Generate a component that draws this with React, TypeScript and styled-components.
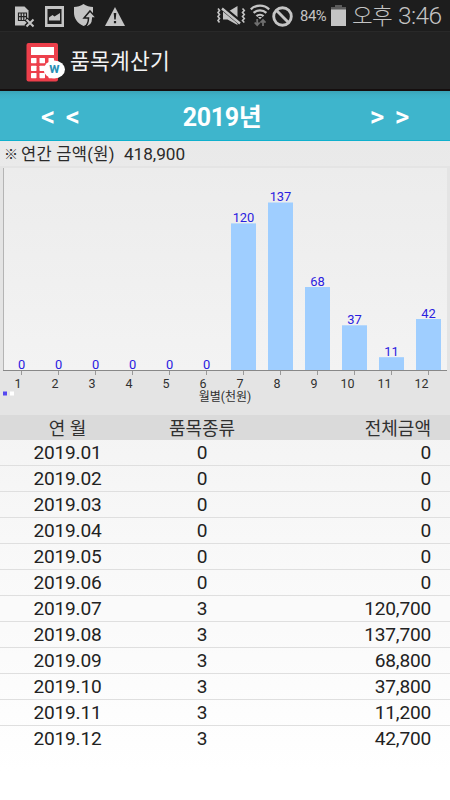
import React from "react";
import styled, { createGlobalStyle } from "styled-components";

const GlobalStyle = createGlobalStyle`
  body {
    margin: 0;
    background: #fff;
    font-family: Roboto, "Noto Sans CJK KR", sans-serif;
  }
`;

const Screen = styled.div`
  width: 450px;
  height: 800px;
  display: flex;
  flex-direction: column;
  overflow: hidden;
`;

const StatusBar = styled.header`
  height: 31px;
  flex: none;
  background: #1d1d1d;
  color: #c4c4c4;
  display: flex;
  align-items: center;
  justify-content: space-between;
  padding: 0 9px 0 14px;
  box-sizing: border-box;
`;

const StatusGroup = styled.div`
  display: flex;
  align-items: center;
  height: 31px;
`;

const StatusIcon = styled.svg<{ $gap?: number; $drop?: number }>`
  display: block;
  flex: none;
  margin-right: ${(p) => p.$gap ?? 0}px;
  margin-top: ${(p) => p.$drop ?? 0}px;
`;

const Battery = styled.span`
  font-size: 14.8px;
  line-height: 31px;
  letter-spacing: -0.4px;
  width: 28px;
  margin-right: 3px;
  padding-top: 2px;
  white-space: nowrap;
`;

const Clock = styled.span`
  display: flex;
  align-items: center;
  width: 89px;
  font-weight: 300;
  font-size: 24.5px;
  line-height: 31px;
  letter-spacing: -0.6px;
  white-space: nowrap;
`;

const ClockPeriod = styled.span`
  width: 46px;
  flex: none;
  font-size: 22.5px;
  line-height: 28px;
  letter-spacing: -0.8px;
`;

const TitleBar = styled.div`
  height: 60px;
  flex: none;
  box-sizing: border-box;
  background: #222;
  border-top: 1px solid #292929;
  border-bottom: 2px solid #150e0e;
  display: flex;
  align-items: center;
  padding: 3px 0 0 26px;
`;

const Title = styled.h1`
  margin: 0 0 0 5px;
  color: #f3f3f3;
  font-size: 21.5px;
  line-height: 30px;
  font-weight: 400;
  letter-spacing: 0.25px;
`;

const YearBar = styled.nav`
  height: 50px;
  flex: none;
  box-sizing: border-box;
  display: grid;
  grid-template-columns: 121px 1fr 121px;
  align-items: center;
  background: linear-gradient(#3aa4b7 0, #3db0c6 4px, #3eb5cc 9px);
  border-bottom: 1px solid #0fb0cd;
  color: #fff;
`;

const Arrow = styled.button`
  border: 0;
  background: none;
  padding: 0;
  color: #fff;
  font: 500 28px/48px Roboto, sans-serif;
  word-spacing: 3.6px;
  text-align: center;
  white-space: nowrap;
`;

const Year = styled.div`
  text-align: center;
  font-size: 25px;
  line-height: 49px;
  font-weight: 700;
  padding: 2px 6px 0 0;
  letter-spacing: -0.35px;
`;

const Content = styled.main`
  flex: 1;
  display: flex;
  flex-direction: column;
  background: linear-gradient(#e9e9e9, #fff 630px);
`;

const Summary = styled.div`
  height: 25px;
  flex: none;
  display: flex;
  padding-left: 4px;
  font-size: 16.5px;
  line-height: 27px;
  color: #2a2a2a;
  white-space: pre;
`;

const Mark = styled.span`
  width: 17px;
  font-size: 14px;
  font-weight: 300;
`;

const SummaryLabel = styled.span`
  width: 103px;
  letter-spacing: 0.3px;
`;

const SummaryAmount = styled.span`
  font-size: 17.2px;
  letter-spacing: -0.05px;
  line-height: 26px;
`;

const ChartArea = styled.section`
  height: 249px;
  flex: none;
  background: #e4e4e4;
`;

const ChartSvg = styled.svg`
  display: block;
`;

const ChartLabel = styled.text<{ $tone: "value" | "month" | "caption" }>`
  font-size: ${(p) => ({ value: 12.9, month: 12.5, caption: 12 })[p.$tone]}px;
  fill: ${(p) => (p.$tone === "value" ? "#2a20e0" : "#303030")};
  text-anchor: ${(p) => (p.$tone === "month" ? "end" : "middle")};
`;

const Table = styled.section`
  display: flex;
  flex-direction: column;
`;

const Row = styled.div<{ $head?: boolean; $last?: boolean }>`
  height: ${(p) => (p.$head ? 25 : 26)}px;
  box-sizing: border-box;
  display: grid;
  grid-template-columns: 135px 134px 1fr;
  padding-right: 19px;
  text-align: center;
  font-size: ${(p) => (p.$head ? 18 : 19.1)}px;
  letter-spacing: ${(p) => (p.$head ? 0 : -0.2)}px;
  line-height: ${(p) => (p.$head ? 27 : 26)}px;
  color: ${(p) => (p.$head ? "#303030" : "#222")};
  background: ${(p) => (p.$head ? "#dadada" : "rgba(255,255,255,.15)")};
  border-bottom: ${(p) => (p.$head || p.$last ? 0 : 1)}px solid #dfdfdf;
`;

const Amount = styled.span`
  text-align: right;
`;

const months = [
  { value: 0, top: 370, kinds: 0, total: "0" },
  { value: 0, top: 370, kinds: 0, total: "0" },
  { value: 0, top: 370, kinds: 0, total: "0" },
  { value: 0, top: 370, kinds: 0, total: "0" },
  { value: 0, top: 370, kinds: 0, total: "0" },
  { value: 0, top: 370, kinds: 0, total: "0" },
  { value: 120, top: 223.4, kinds: 3, total: "120,700" },
  { value: 137, top: 202.5, kinds: 3, total: "137,700" },
  { value: 68, top: 287, kinds: 3, total: "68,800" },
  { value: 37, top: 325.3, kinds: 3, total: "37,800" },
  { value: 11, top: 357.2, kinds: 3, total: "11,200" },
  { value: 42, top: 319, kinds: 3, total: "42,700" },
];

function SimIcon() {
  return (
    <StatusIcon width="21" height="23" viewBox="0 0 21 23" $gap={10} $drop={1}>
      <path d="M1 1.500h9.500l4 4V20.500H1z" fill="#c4c4c4" />
      <path d="M4.500 8h8v7.500h-8zM4.500 11.700h8M7.200 8v7.500M9.800 8v7.500" fill="none" stroke="#222" strokeWidth="1.200" />
      <path d="M12 14l7.500 7.500m0-7.500L12 21.500" stroke="#1d1d1d" strokeWidth="4.500" />
      <path d="M12.500 14.500l7 7m0-7l-7 7" stroke="#c4c4c4" strokeWidth="2" />
    </StatusIcon>
  );
}

function PictureIcon() {
  return (
    <StatusIcon width="19" height="21" viewBox="0 0 19 21" $gap={9} $drop={1}>
      <path d="M0 0h19v21H0z" fill="#c4c4c4" />
      <path d="M2.500 3h14v15h-14z" fill="#1f1f1f" />
      <path d="M4 14.500v-3l3.500-2.500 2 1.500L15 7v7.500z" fill="#c4c4c4" />
    </StatusIcon>
  );
}

function ShieldIcon() {
  return (
    <StatusIcon width="24" height="25" viewBox="0 0 24 25" $gap={8}>
      <path d="M10.500 1C8 3 4 4 1 4v6c0 5 3 10 9.500 13C16 21 20 17 20 11V4c-3 0-7-1-9.500-3z" fill="#c4c4c4" />
      <path
        d="M17 8l6.500 7h-3.700c0 6-3.500 9-8.300 9 3-2 4-4.500 4-9H11z"
        fill="#c4c4c4"
        stroke="#1d1d1d"
        strokeWidth="1.500"
      />
    </StatusIcon>
  );
}

function WarningIcon() {
  return (
    <StatusIcon width="20" height="19" viewBox="0 0 20 19" $drop={1}>
      <path d="M10 0l10 19H0z" fill="#c4c4c4" />
      <path d="M8.700 6h2.600l-.6 6.500H9.300zM8.900 14h2.200v2.200H8.900z" fill="#1d1d1d" />
    </StatusIcon>
  );
}

function MuteIcon() {
  return (
    <StatusIcon width="30" height="20" viewBox="0 0 30 20" $gap={4} $drop={1}>
      <path d="M7 6h4.500L21.500 0v19l-10-5.500H7z" fill="#c4c4c4" />
      <path d="M6 1.500l20 16.500" stroke="#1d1d1d" strokeWidth="5" />
      <path d="M6 2.500l18 15" stroke="#c4c4c4" strokeWidth="2.400" />
      <path
        d="M2 2.500l1.500 2L2 6.500l1.500 2-1.500 2 1.500 2-1.500 2 1.500 2M26.500 2.500l1.800 2-1.800 2 1.800 2-1.800 2 1.800 2-1.800 2 1.800 2"
        fill="none"
        stroke="#c4c4c4"
        strokeWidth="1.600"
      />
    </StatusIcon>
  );
}

function WifiIcon() {
  return (
    <StatusIcon width="20" height="23" viewBox="0 0 20 23" $gap={2}>
      <path
        d="M.8 5.300c5.200-5 13.200-5 18.400 0M3.600 8.900c3.600-3.400 9.200-3.400 12.800 0M6.500 12.200c2-1.900 5-1.900 7 0"
        fill="none"
        stroke="#c4c4c4"
        strokeWidth="2.300"
      />
      <path d="M8 13h4l-2 2.300z" fill="#c4c4c4" />
      <path d="M7.200 15v6M4.700 18.500l2.500 2.700 2.500-2.700M13 22v-6M10.500 18.700l2.500-2.700 2.500 2.700" fill="none" stroke="#707070" strokeWidth="1.800" />
    </StatusIcon>
  );
}

function BlockedIcon() {
  return (
    <StatusIcon width="21" height="21" viewBox="0 0 21 21" $gap={7} $drop={1}>
      <circle cx="10.500" cy="10.500" r="8.800" fill="none" stroke="#c4c4c4" strokeWidth="2.900" />
      <path d="M4.300 4.300l12.400 12.400" stroke="#c4c4c4" strokeWidth="2.900" />
    </StatusIcon>
  );
}

function BatteryIcon() {
  return (
    <StatusIcon width="15" height="21" viewBox="0 0 15 21" $gap={6}>
      <path d="M4 0h7v2h4v4H0V2h4z" fill="#5b5b5b" />
      <path d="M0 4.500h15V21H0z" fill="#c4c4c4" />
    </StatusIcon>
  );
}

const LogoLetter = styled.text`
  font: 700 14px Roboto, sans-serif;
  fill: #2a8fb5;
  text-anchor: middle;
`;

function CalculatorLogo() {
  return (
    <svg width="39" height="40" viewBox="0 0 39 40">
      <rect x="0.500" y="1" width="31.500" height="38.500" rx="2" fill="#ed3f4b" />
      <path d="M5 5h23v8H5z" fill="#fff" />
      {[16, 23.700, 31].map((y) =>
        [5, 13.500, 22.500].map((x) => (
          <rect key={`${x}-${y}`} x={x} y={y} width="5.500" height="5.200" rx=".6" fill="#fff" />
        ))
      )}
      <ellipse cx="28.300" cy="27.500" rx="10.700" ry="9" fill="#fff" />
      <LogoLetter x="28.300" y="31.300">w</LogoLetter>
    </svg>
  );
}

function Chart() {
  return (
    <ChartArea>
      <ChartSvg width="450" height="249" viewBox="0 166 450 249">
        <defs>
          <linearGradient id="plot" x1="0" y1="0" x2="0" y2="1">
            <stop offset="0" stopColor="#ececec" />
            <stop offset="1" stopColor="#f3f3f3" />
          </linearGradient>
        </defs>
        <rect x="3" y="168" width="444" height="202" fill="url(#plot)" />
        <path d="M3.500 168v202" stroke="#b4b4b4" />
        {months.map((m, i) => {
          const tick = 21.500 + i * 37;
          return (
            <g key={i}>
              {m.value > 0 && (
                <rect x={tick - 12.500} y={m.top} width="25" height={370.5 - m.top} fill="#9fceff" />
              )}
              <path d={`M${tick} 371v4`} stroke="#999" />
              <ChartLabel $tone="value" x={tick} y={m.top - 1.300}>{m.value}</ChartLabel>
              <ChartLabel $tone="month" x={tick} y="388">{i + 1}</ChartLabel>
            </g>
          );
        })}
        <path d="M3 370.500h444" stroke="#888" />
        <ChartLabel $tone="caption" x="225" y="400.500">월별(천원)</ChartLabel>
        <rect x="3" y="391.500" width="4" height="4" fill="#5548f0" />
        <rect x="10" y="391.500" width="4" height="4" fill="#fff" />
      </ChartSvg>
    </ChartArea>
  );
}

export default function App() {
  return (
    <Screen>
      <GlobalStyle />
      <StatusBar>
        <StatusGroup>
          <SimIcon />
          <PictureIcon />
          <ShieldIcon />
          <WarningIcon />
        </StatusGroup>
        <StatusGroup>
          <MuteIcon />
          <WifiIcon />
          <BlockedIcon />
          <Battery>84%</Battery>
          <BatteryIcon />
          <Clock>
            <ClockPeriod>오후</ClockPeriod>
            3:46
          </Clock>
        </StatusGroup>
      </StatusBar>
      <TitleBar>
        <CalculatorLogo />
        <Title>품목계산기</Title>
      </TitleBar>
      <YearBar>
        <Arrow>&lt; &lt;</Arrow>
        <Year>2019년</Year>
        <Arrow>&gt; &gt;</Arrow>
      </YearBar>
      <Content>
        <Summary>
          <Mark>※</Mark>
          <SummaryLabel>연간 금액(원)</SummaryLabel>
          <SummaryAmount>418,900</SummaryAmount>
        </Summary>
        <Chart />
        <Table>
          <Row $head>
            <span>연 월</span>
            <span>품목종류</span>
            <Amount>전체금액</Amount>
          </Row>
          {months.map((m, i) => (
            <Row key={i} $last={i === 11}>
              <span>2019.{String(i + 1).padStart(2, "0")}</span>
              <span>{m.kinds}</span>
              <Amount>{m.total}</Amount>
            </Row>
          ))}
        </Table>
      </Content>
    </Screen>
  );
}
